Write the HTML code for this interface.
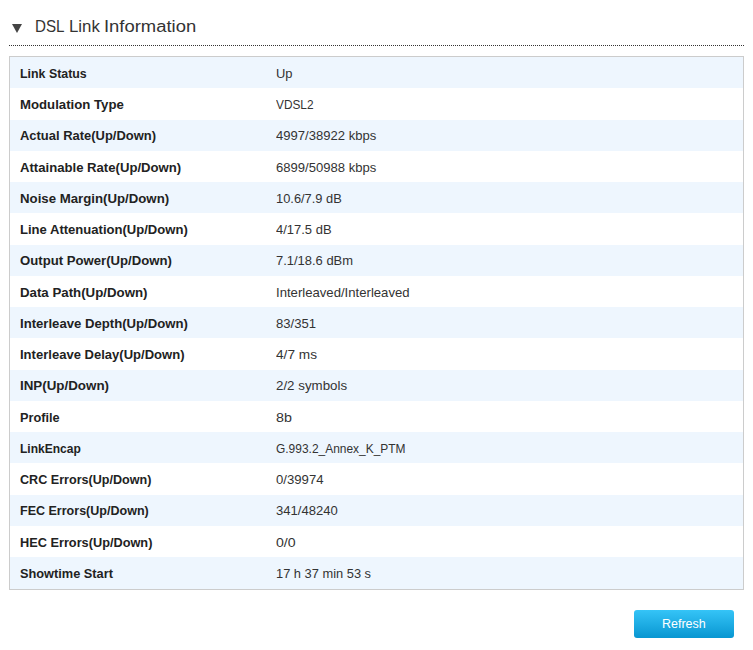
<!DOCTYPE html>
<html><head><meta charset="utf-8"><style>
html,body{margin:0;padding:0;background:#fff;width:753px;height:650px;overflow:hidden;position:relative;font-family:"Liberation Sans",sans-serif}
.tri{position:absolute;left:12px;top:24px;width:0;height:0;border-left:5px solid transparent;border-right:5px solid transparent;border-top:9px solid #444444}
.h{position:absolute;left:35px;top:18px;font-size:17.3px;color:#333333;white-space:nowrap;line-height:1;transform-origin:0 0;transform:scaleX(1.0000)}
.dot{position:absolute;left:9px;top:45px;width:735px;height:0;border-top:1px dotted #333333}
.box{position:absolute;left:9px;top:56px;width:733px;height:532px;border:1px solid #cccccc;overflow:hidden}
.r{position:absolute;left:0;width:733px}
.l,.v{position:absolute;white-space:nowrap;line-height:1;font-size:13px;transform-origin:0 0}
.l{left:9.75px;font-weight:bold;color:#222222}
.v{left:266px;color:#333333}
.btn{position:absolute;left:634px;top:610px;width:100px;height:28px;border-radius:3px;background:linear-gradient(to bottom,#35c4f7,#0896d1)}
.bt{position:absolute;left:662px;top:618px;font-size:12px;color:#fff;white-space:nowrap;line-height:1;transform-origin:0 0;transform:scaleX(1.0400)}
</style></head><body>
<div class="tri"></div>
<div class="h" style="left:35.1px;transform:scaleX(0.878)">DSL</div><div class="h" style="left:69px;transform:scaleX(0.974)">Link</div><div class="h" style="left:104.35px;transform:scaleX(1.066)">Information</div>
<div class="dot"></div>
<div class="box">
<div class="r" style="top:0px;height:31px;background:#eef6fe"></div>
<div class="l" style="top:9.75px;transform:scaleX(0.9524)">Link Status</div>
<div class="v" style="top:9.75px;transform:scaleX(0.9961)">Up</div>
<div class="r" style="top:31px;height:32px;background:#ffffff"></div>
<div class="l" style="top:41.0px;transform:scaleX(1.0148)">Modulation Type</div>
<div class="v" style="top:41.0px;transform:scaleX(0.9108)">VDSL2</div>
<div class="r" style="top:63px;height:31px;background:#eef6fe"></div>
<div class="l" style="top:72.25px;transform:scaleX(0.9963)">Actual Rate(Up/Down)</div>
<div class="v" style="top:72.25px;transform:scaleX(1.0051)">4997/38922 kbps</div>
<div class="r" style="top:94px;height:31px;background:#ffffff"></div>
<div class="l" style="top:103.5px;transform:scaleX(1.0095)">Attainable Rate(Up/Down)</div>
<div class="v" style="top:103.5px;transform:scaleX(1.0051)">6899/50988 kbps</div>
<div class="r" style="top:125px;height:31px;background:#eef6fe"></div>
<div class="l" style="top:134.75px;transform:scaleX(1.0172)">Noise Margin(Up/Down)</div>
<div class="v" style="top:134.75px;transform:scaleX(0.9897)">10.6/7.9 dB</div>
<div class="r" style="top:156px;height:32px;background:#ffffff"></div>
<div class="l" style="top:166.0px;transform:scaleX(1.0042)">Line Attenuation(Up/Down)</div>
<div class="v" style="top:166.0px;transform:scaleX(0.9984)">4/17.5 dB</div>
<div class="r" style="top:188px;height:31px;background:#eef6fe"></div>
<div class="l" style="top:197.25px;transform:scaleX(1.0114)">Output Power(Up/Down)</div>
<div class="v" style="top:197.25px;transform:scaleX(0.9964)">7.1/18.6 dBm</div>
<div class="r" style="top:219px;height:31px;background:#ffffff"></div>
<div class="l" style="top:228.5px;transform:scaleX(1.0203)">Data Path(Up/Down)</div>
<div class="v" style="top:228.5px;transform:scaleX(1.0100)">Interleaved/Interleaved</div>
<div class="r" style="top:250px;height:31px;background:#eef6fe"></div>
<div class="l" style="top:259.75px;transform:scaleX(1.0103)">Interleave Depth(Up/Down)</div>
<div class="v" style="top:259.75px;transform:scaleX(1.0081)">83/351</div>
<div class="r" style="top:281px;height:32px;background:#ffffff"></div>
<div class="l" style="top:291.0px;transform:scaleX(1.0031)">Interleave Delay(Up/Down)</div>
<div class="v" style="top:291.0px;transform:scaleX(1.0500)">4/7 ms</div>
<div class="r" style="top:313px;height:31px;background:#eef6fe"></div>
<div class="l" style="top:322.25px;transform:scaleX(1.0269)">INP(Up/Down)</div>
<div class="v" style="top:322.25px;transform:scaleX(1.0248)">2/2 symbols</div>
<div class="r" style="top:344px;height:31px;background:#ffffff"></div>
<div class="l" style="top:353.5px;transform:scaleX(0.9783)">Profile</div>
<div class="v" style="top:353.5px;transform:scaleX(1.0993)">8b</div>
<div class="r" style="top:375px;height:31px;background:#eef6fe"></div>
<div class="l" style="top:384.75px;transform:scaleX(0.9246)">LinkEncap</div>
<div class="v" style="top:384.75px;transform:scaleX(0.9193)">G.993.2_Annex_K_PTM</div>
<div class="r" style="top:406px;height:32px;background:#ffffff"></div>
<div class="l" style="top:416.0px;transform:scaleX(0.9682)">CRC Errors(Up/Down)</div>
<div class="v" style="top:416.0px;transform:scaleX(1.0110)">0/39974</div>
<div class="r" style="top:438px;height:31px;background:#eef6fe"></div>
<div class="l" style="top:447.25px;transform:scaleX(0.9632)">FEC Errors(Up/Down)</div>
<div class="v" style="top:447.25px;transform:scaleX(1.0050)">341/48240</div>
<div class="r" style="top:469px;height:31px;background:#ffffff"></div>
<div class="l" style="top:478.5px;transform:scaleX(0.9801)">HEC Errors(Up/Down)</div>
<div class="v" style="top:478.5px;transform:scaleX(1.0856)">0/0</div>
<div class="r" style="top:500px;height:32px;background:#eef6fe"></div>
<div class="l" style="top:509.75px;transform:scaleX(0.9820)">Showtime Start</div>
<div class="v" style="top:509.75px;transform:scaleX(0.9886)">17 h 37 min 53 s</div>
</div>
<div class="btn"></div>
<div class="bt">Refresh</div>
</body></html>
